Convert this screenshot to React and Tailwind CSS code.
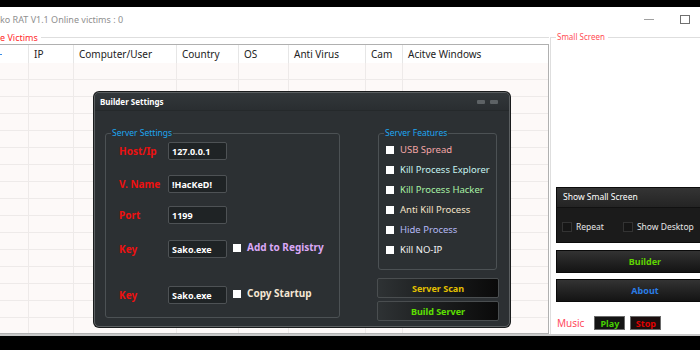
const cols = [
  { w: "w-[29px]", t: "" },
  { w: "w-[45px]", t: "IP" },
  { w: "w-[103px]", t: "Computer/User" },
  { w: "w-[62px]", t: "Country" },
  { w: "w-[50px]", t: "OS" },
  { w: "w-[77px]", t: "Anti Virus" },
  { w: "w-[37px]", t: "Cam" },
  { w: "flex-1", t: "Acitve Windows" },
];

const features = [
  { t: "USB Spread", c: "text-[#f4a7a7]" },
  { t: "Kill Process Explorer", c: "text-[#c6f3f0]" },
  { t: "Kill Process Hacker", c: "text-[#a8f0a4]" },
  { t: "Anti Kill Process", c: "text-[#f3e3c8]" },
  { t: "Hide Process", c: "text-[#b4b8f4]" },
  { t: "Kill NO-IP", c: "text-[#f2f2f2]" },
];

function Field({ label, value, mt, extra }) {
  return (
    <div className={`flex items-center h-[18px] ${mt}`}>
      <div className="w-[62px] pl-[13px] shrink-0 text-[10px] font-bold text-[#ec1010] leading-none whitespace-nowrap">
        {label}
      </div>
      <div className="w-[59px] h-[18px] shrink-0 bg-[#1f2325] border border-[#4e5255] rounded-[2px] flex items-center px-[3px] text-[9px] font-bold text-white leading-none">
        {value}
      </div>
      {extra}
    </div>
  );
}

function Legend({ children, bg }) {
  return (
    <div className={`-mt-[7px] ml-[5px] px-[1px] w-fit h-[12px] leading-[12px] text-[8.5px] text-[#1ea6f0] ${bg}`}>
      {children}
    </div>
  );
}

export default function App() {
  const rows = Array.from({ length: 17 });
  return (
    <div className="relative w-[700px] h-[350px] overflow-hidden bg-black font-['Noto_Sans',sans-serif]">
      <div className="h-[7px]" />
      <div className="h-[329px] bg-white flex flex-col border-b-2 border-[#c8c8c8]">
        {/* title row */}
        <div className="h-[25px] flex items-center shrink-0">
          <span className="text-[9px] text-[#8f8f8f] leading-none whitespace-nowrap">
            ko RAT V1.1 Online victims : 0
          </span>
          <div className="ml-auto flex items-center">
            <div className="w-[10px] h-px bg-[#a0a0a0]" />
            <div className="ml-[26px] mr-[10px] w-[10px] h-[9px] border border-[#707070]" />
          </div>
        </div>
        {/* main */}
        <div className="flex-1 flex min-h-0">
          {/* left: victims */}
          <div className="w-[549px] flex flex-col shrink-0">
            <div className="h-[10px] flex items-center shrink-0">
              <span className="text-[9px] text-[#ff2a2a] leading-none whitespace-nowrap">e Victims</span>
              <div className="flex-1 h-px bg-[#dedede] ml-[3px]" />
            </div>
            <div className="mt-[2px] flex-1 min-h-0 border-t border-r border-b border-[#b0b0b0] flex flex-col overflow-hidden">
              <div className="h-[18px] shrink-0 flex bg-white">
                {cols.map((c, i) => (
                  <div
                    key={i}
                    className={`${c.w} shrink-0 h-full flex items-center pl-[5px] border-r border-[#e6e6e6] last:border-r-0 text-[10px] text-[#222] leading-none whitespace-nowrap`}
                  >
                    {i === 0 ? <div className="-ml-[5px] w-[2px] h-px bg-[#3a8ee6]" /> : c.t}
                  </div>
                ))}
              </div>
              <div className="flex-1 bg-[#fdf9f8] flex flex-col">
                {rows.map((_, r) => (
                  <div key={r} className="h-[17px] shrink-0 flex border-b border-[#eeeae9]">
                    {cols.map((c, i) => (
                      <div key={i} className={`${c.w} shrink-0 h-full border-r border-[#eeeae9] last:border-r-0`} />
                    ))}
                  </div>
                ))}
              </div>
            </div>
          </div>
          {/* right: small screen */}
          <div className="ml-[1px] flex-1 flex flex-col min-w-0">
            <div className="h-[10px] flex items-center shrink-0">
              <div className="w-[6px] h-px bg-[#dedede]" />
              <span className="ml-[1px] text-[8px] text-[#ff4d55] leading-none whitespace-nowrap">Small Screen</span>
              <div className="flex-1 h-px bg-[#dedede] ml-[3px]" />
            </div>
            <div className="-mt-[5px] flex-1 border-l border-[#dedede] pl-[5px] pt-[150px] flex flex-col">
              <div className="w-[180px] h-[56px] shrink-0 border border-[#0c0c0c] flex flex-col">
                <div className="h-[20px] bg-gradient-to-b from-[#343434] to-[#242424] border-b border-[#111] flex items-center pl-[6px] text-[8.5px] text-white leading-none whitespace-nowrap">
                  Show Small Screen
                </div>
                <div className="flex-1 bg-[#1b1b1b] flex items-center pl-[5px] pt-[4px] text-[8.5px] text-[#e6e6e6] leading-none">
                  <div className="w-[10px] h-[10px] bg-[#161616] border border-[#333]" />
                  <span className="ml-[4px]">Repeat</span>
                  <div className="ml-[19px] w-[10px] h-[10px] bg-[#161616] border border-[#333]" />
                  <span className="ml-[4px] whitespace-nowrap">Show Desktop</span>
                </div>
              </div>
              <div className="mt-[7px] w-[178px] h-[23px] shrink-0 border border-[#0a0a0a] bg-gradient-to-b from-[#333] to-[#141414] flex items-center justify-center text-[9px] font-bold text-[#5fd400] leading-none">
                Builder
              </div>
              <div className="mt-[6px] w-[178px] h-[23px] shrink-0 border border-[#0a0a0a] bg-gradient-to-b from-[#333] to-[#141414] flex items-center justify-center text-[9px] font-bold text-[#2a7de6] leading-none">
                About
              </div>
              <div className="mt-[14px] flex items-center h-[14px]">
                <span className="ml-[1px] text-[10px] text-[#ff4a5c] leading-none">Music</span>
                <div className="ml-[10px] w-[31px] h-[14px] bg-[#141414] border border-[#6a6a6a] flex items-center justify-center text-[9px] font-bold text-[#46d000] leading-none">
                  Play
                </div>
                <div className="ml-[5px] w-[31px] h-[14px] bg-[#1a0e0e] border border-[#6a6a6a] flex items-center justify-center text-[9px] font-bold text-[#e00000] leading-none">
                  Stop
                </div>
              </div>
            </div>
          </div>
        </div>
      </div>

      {/* Builder Settings dialog (floating window) */}
      <div className="absolute left-[94px] top-[92px] w-[416px] h-[235px] rounded-[5px] border border-[#5c6062] bg-[#2c3033] shadow-[0_0_0_1px_#1a1c1d] flex flex-col overflow-hidden">
        <div className="h-[18px] shrink-0 bg-gradient-to-b from-[#32373a] to-[#2a2e31] border-b border-[#25292b] flex items-center pl-[5px] pr-[11px]">
          <span className="text-[8px] font-bold text-white leading-none whitespace-nowrap">Builder Settings</span>
          <div className="ml-auto flex gap-[5px]">
            <div className="w-[8px] h-[4px] rounded-[1px] bg-[#5d6265]" />
            <div className="w-[8px] h-[4px] rounded-[1px] bg-[#5d6265]" />
          </div>
        </div>
        <div className="flex pl-[10px] pt-[22px]">
          {/* Server Settings */}
          <div className="w-[235px] h-[185px] shrink-0 border border-[#4c5154] rounded-[3px] flex flex-col">
            <Legend bg="bg-[#2c3033]">Server Settings</Legend>
            <Field label="Host/Ip" value="127.0.0.1" mt="mt-[3px]" />
            <Field label="V. Name" value="!HacKeD!" mt="mt-[15px]" />
            <Field label="Port" value="1199" mt="mt-[13px]" />
            <Field
              label="Key"
              value="Sako.exe"
              mt="mt-[16px]"
              extra={
                <>
                  <div className="ml-[6px] w-[8px] h-[8px] bg-white shrink-0 -mt-[3px]" />
                  <span className="ml-[6px] -mt-[4px] text-[10px] font-bold text-[#dba8f7] leading-none whitespace-nowrap">
                    Add to Registry
                  </span>
                </>
              }
            />
            <Field
              label="Key"
              value="Sako.exe"
              mt="mt-[28px]"
              extra={
                <>
                  <div className="ml-[6px] w-[8px] h-[8px] bg-white shrink-0 -mt-[3px]" />
                  <span className="ml-[6px] -mt-[4px] text-[10px] font-bold text-[#f4e6d4] leading-none whitespace-nowrap">
                    Copy Startup
                  </span>
                </>
              }
            />
          </div>
          {/* right column */}
          <div className="ml-[37px] w-[122px] flex flex-col">
            <div className="ml-[1px] w-[119px] h-[137px] border border-[#4c5154] rounded-[3px] flex flex-col">
              <Legend bg="bg-[#2c3033]">Server Features</Legend>
              <div className="mt-[1px] flex flex-col">
                {features.map((f) => (
                  <div key={f.t} className="h-[20px] flex items-center pl-[7px]">
                    <div className="w-[8px] h-[8px] bg-white shrink-0" />
                    <span className={`ml-[6px] text-[9.5px] leading-none whitespace-nowrap ${f.c}`}>{f.t}</span>
                  </div>
                ))}
              </div>
            </div>
            <div className="mt-[8px] h-[20px] border border-[#4a4e50] rounded-[2px] bg-gradient-to-r from-[#2e3234] to-[#0a0a0a] flex items-center justify-center text-[9px] font-bold text-[#e3c000] leading-none">
              Server Scan
            </div>
            <div className="mt-[3px] h-[20px] border border-[#4a4e50] rounded-[2px] bg-gradient-to-r from-[#2e3234] to-[#0a0a0a] flex items-center justify-center text-[9px] font-bold text-[#5ee000] leading-none">
              Build Server
            </div>
          </div>
        </div>
      </div>
    </div>
  );
}
